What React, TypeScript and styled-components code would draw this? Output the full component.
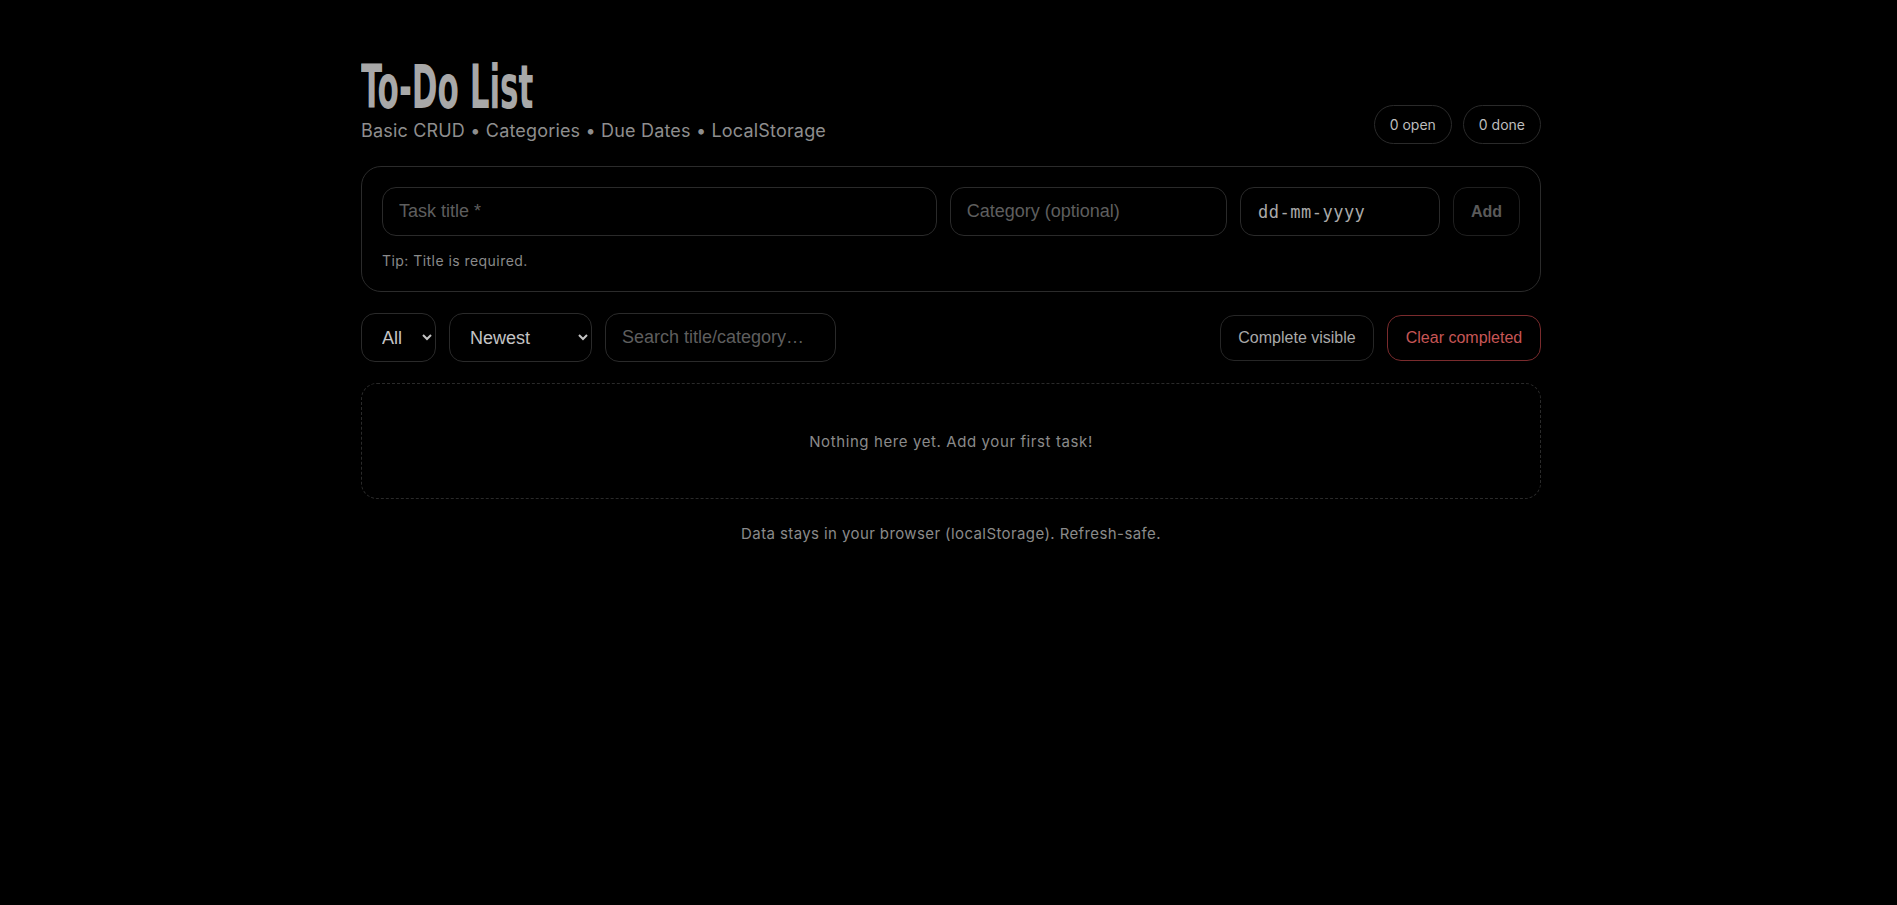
import React, { useState } from "react";
import styled, { createGlobalStyle } from "styled-components";

const GlobalStyle = createGlobalStyle`
  html, body { margin: 0; padding: 0; background: #000; }
  body { font-family: "Liberation Sans", Arial, sans-serif; color: #bdbdbd; }
  * { box-sizing: border-box; }
`;

const Shell = styled.div`
  min-height: 905px;
  padding: 58px 0 40px 5px;
  background: #000;
`;

const Page = styled.main`
  width: 1180px;
  margin: 0 auto;
  display: flex;
  flex-direction: column;
`;

const Header = styled.header`
  display: flex;
  justify-content: space-between;
  align-items: flex-end;
`;

const TitleBlock = styled.div`
  display: flex;
  flex-direction: column;
`;

const Title = styled.h1`
  margin: 0;
  font-family: "Liberation Sans Narrow", "DejaVu Sans Condensed", "Liberation Sans", sans-serif;
  font-stretch: condensed;
  font-weight: 700;
  font-size: 60px;
  line-height: 58px;
  color: #a8a8a8;
  transform: scaleX(0.575);
  transform-origin: left center;
  white-space: nowrap;
`;

const Subtitle = styled.p`
  margin: 2px 0 0;
  font-family: Inter, "Open Sans", sans-serif;
  font-size: 18px;
  letter-spacing: 0.18px;
  line-height: 26px;
  color: #8e8e8e;
`;

const Badges = styled.div`
  display: flex;
  gap: 11px;
`;

const Badge = styled.span`
  height: 39px;
  padding: 0 15px;
  display: inline-flex;
  align-items: center;
  border: 1px solid #2a2a2a;
  border-radius: 999px;
  font-family: Inter, "Open Sans", sans-serif;
  font-size: 14px;
  color: #bdbdbd;
`;

const Card = styled.section`
  margin-top: 22px;
  border: 1px solid #2b2b2b;
  border-radius: 20px;
  padding: 20px;
`;

const FormRow = styled.div`
  display: grid;
  grid-template-columns: 2fr 1fr 200px 67px;
  gap: 13px;
`;

const Field = styled.input`
  height: 49px;
  width: 100%;
  padding: 0 16px;
  border: 1px solid #2a2a2a;
  border-radius: 14px;
  background: #000;
  color: #dcdcdc;
  font-family: "Liberation Sans", Arial, sans-serif;
  font-size: 18px;
  outline: none;
  &::placeholder { color: #5e5e5e; }
`;

const DateField = styled(Field)`
  padding: 0 17px;
  font-family: "DejaVu Sans Mono", "Liberation Mono", monospace;
  font-size: 17px;
  color: #a9a9a9;
  letter-spacing: 0.5px;
`;

const AddButton = styled.button`
  height: 49px;
  padding: 0;
  border: 1px solid #1f1f1f;
  border-radius: 14px;
  background: #000;
  color: #5a5a5a;
  font-family: "Liberation Sans", Arial, sans-serif;
  font-weight: 700;
  font-size: 16px;
`;

const Tip = styled.p`
  margin: 14px 0 0;
  font-family: Inter, "Open Sans", sans-serif;
  font-size: 14px;
  letter-spacing: 0.45px;
  line-height: 21px;
  color: #8a8a8a;
`;

const Toolbar = styled.div`
  margin-top: 21px;
  display: flex;
  align-items: center;
  gap: 13px;
`;

const Select = styled.select<{ $w: number }>`
  width: ${(p) => p.$w}px;
  height: 49px;
  padding: 0 6px 0 16px;
  border: 1px solid #2a2a2a;
  border-radius: 14px;
  background: #000;
  color: #c4c4c4;
  font-family: "Liberation Sans", Arial, sans-serif;
  font-size: 18px;
  color-scheme: dark;
  outline: none;
`;

const Search = styled(Field)`
  width: 231px;
`;

const Spacer = styled.div`
  flex: 1;
`;

const ActionButton = styled.button<{ $danger?: boolean }>`
  height: 46px;
  min-width: 154px;
  padding: 0 16px;
  border: 1px solid ${(p) => (p.$danger ? "#7a2b2d" : "#262626")};
  border-radius: 14px;
  background: #000;
  color: ${(p) => (p.$danger ? "#c75656" : "#a9a9a9")};
  font-family: "Liberation Sans", Arial, sans-serif;
  font-size: 16px;
  cursor: pointer;
`;

const Empty = styled.div`
  margin-top: 21px;
  height: 116px;
  display: flex;
  align-items: center;
  justify-content: center;
  border: 1px dashed #2a2a2a;
  border-radius: 16px;
  font-family: Inter, "Open Sans", sans-serif;
  font-size: 15px;
  letter-spacing: 0.6px;
  color: #8a8a8a;
`;

const Footer = styled.p`
  margin: 25px 0 0;
  text-align: center;
  font-family: Inter, "Open Sans", sans-serif;
  font-size: 15px;
  letter-spacing: 0.4px;
  line-height: 20px;
  color: #8a8a8a;
`;

export default function App() {
  const [title, setTitle] = useState("");
  const [category, setCategory] = useState("");
  const [query, setQuery] = useState("");
  return (
    <Shell>
      <GlobalStyle />
      <Page>
        <Header>
          <TitleBlock>
            <Title>To-Do List</Title>
            <Subtitle>Basic CRUD • Categories • Due Dates • LocalStorage</Subtitle>
          </TitleBlock>
          <Badges>
            <Badge>0 open</Badge>
            <Badge>0 done</Badge>
          </Badges>
        </Header>

        <Card>
          <FormRow>
            <Field placeholder="Task title *" value={title} onChange={(e) => setTitle(e.target.value)} />
            <Field placeholder="Category (optional)" value={category} onChange={(e) => setCategory(e.target.value)} />
            <DateField readOnly value="dd-mm-yyyy" />
            <AddButton disabled>Add</AddButton>
          </FormRow>
          <Tip>Tip: Title is required.</Tip>
        </Card>

        <Toolbar>
          <Select $w={75} defaultValue="all">
            <option value="all">All</option>
            <option value="open">Open</option>
            <option value="done">Done</option>
          </Select>
          <Select $w={143} defaultValue="newest">
            <option value="newest">Newest</option>
            <option value="oldest">Oldest</option>
            <option value="due">Due</option>
          </Select>
          <Search placeholder="Search title/category…" value={query} onChange={(e) => setQuery(e.target.value)} />
          <Spacer />
          <ActionButton>Complete visible</ActionButton>
          <ActionButton $danger>Clear completed</ActionButton>
        </Toolbar>

        <Empty>Nothing here yet. Add your first task!</Empty>
        <Footer>Data stays in your browser (localStorage). Refresh-safe.</Footer>
      </Page>
    </Shell>
  );
}
